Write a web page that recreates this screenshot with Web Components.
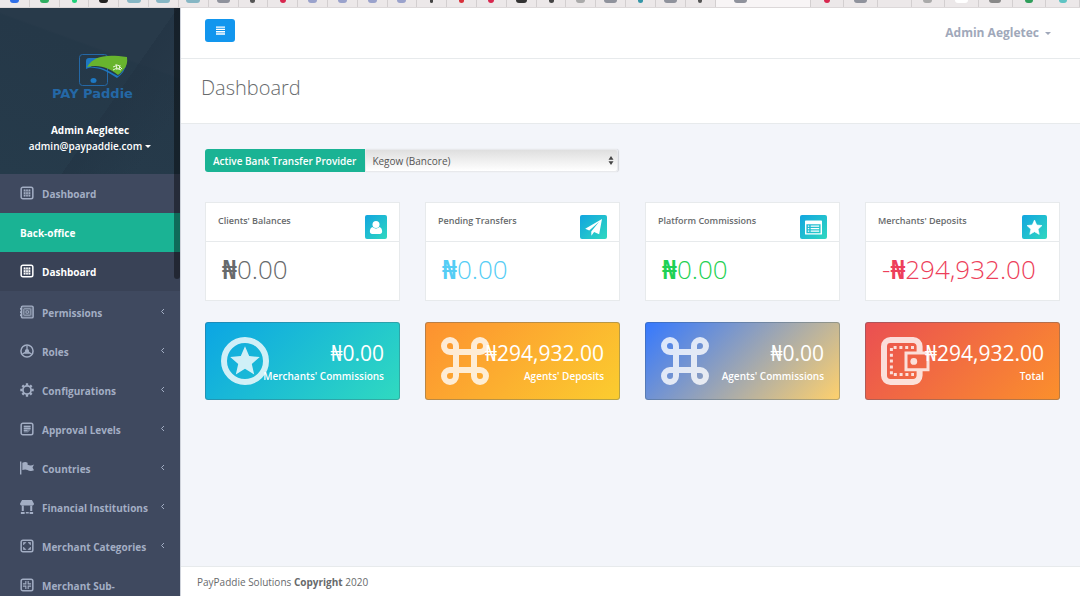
<!DOCTYPE html>
<html lang="en">
<head>
<meta charset="utf-8">
<meta name="viewport" content="width=device-width, initial-scale=1">
<title>PayPaddie - Dashboard</title>
<style>
  html, body { margin: 0; height: 100%; }
  body { font-family: "Open Sans", "Noto Sans", sans-serif; font-size: 10px; line-height: 16px; color: #676a6c; background: #f3f5fa; overflow: hidden; }
</style>
</head>
<body>
<pay-app></pay-app>
<script>
const define = (name, html, setup) => {
  const template = document.createElement('template');
  template.innerHTML = html;
  customElements.define(name, class extends HTMLElement {
    constructor() {
      super();
      this.attachShadow({ mode: 'open' }).append(template.content.cloneNode(true));
    }
    connectedCallback() { if (setup) setup(this, this.shadowRoot); }
  });
};

const STAR = 'M12 1.5l3.1 7 7.4.8-5.5 5 1.6 7.4L12 17.900l-6.600 3.800 1.600-7.400-5.500-5 7.400-.8z';
const frame = '<rect x="2" y="2" width="20" height="20" rx="3" fill="none" stroke="currentColor" stroke-width="2.600"/>';
const ICONS = {
  grid: frame + '<path d="M6 6h12v12H6z" fill="currentColor" opacity=".35"/><path d="M6.500 6h2.600v2.800H6.500zm4.200 0h2.600v2.800h-2.600zm4.200 0h2.600v2.800h-2.600zM6.500 10.500h2.600v3H6.500zm4.200 0h2.600v3h-2.600zm4.200 0h2.600v3h-2.600zM6.500 15.200h2.600V18H6.500zm4.200 0h2.600V18h-2.600zm4.200 0h2.600V18h-2.600z" fill="currentColor"/>',
  safe: '<rect x="2.500" y="2" width="20" height="20" rx="2" fill="currentColor" opacity=".3"/><rect x="2.500" y="2" width="20" height="20" rx="2" fill="none" stroke="currentColor" stroke-width="2.400"/><rect x="6.500" y="6.500" width="12" height="11" rx="1" fill="none" stroke="currentColor" stroke-width="1.500"/><circle cx="12.500" cy="12" r="2.500" fill="none" stroke="currentColor" stroke-width="1.500"/><path d="M0 5h3v3H0zM0 10.500h3v3H0zM0 16h3v3H0z" fill="currentColor"/>',
  wheel: '<circle cx="12" cy="12" r="10.400" fill="none" stroke="currentColor" stroke-width="2.600"/><path d="M12 3v7M12 12l-7.500 5M12 12l7.500 5M7 15.500h10" stroke="currentColor" stroke-width="2.200"/><circle cx="12" cy="12" r="3.600" fill="currentColor"/>',
  gear: '<circle cx="12" cy="12" r="7" fill="none" stroke="currentColor" stroke-width="3"/><path d="M12 .500v4M12 19.500v4M.500 12h4M19.500 12h4M4 4l3 3M17 17l3 3M4 20l3-3M17 7l3-3" stroke="currentColor" stroke-width="4"/>',
  note: frame + '<path d="M6.500 6.500h11.500v7l-4.500 4.500h-7z" fill="currentColor" opacity=".55"/><path d="M6.500 7.500H18M6.500 11H18M6.500 14.500h6" stroke="currentColor" stroke-width="1.800"/>',
  flag: '<path d="M0 1h2.400v22H0zM4 3c4-2 6-2 9 0v3.500c4 1.500 7 1.500 11-.5l-2.500 5L24 16c-5 2.500-8 1-11-.5-3-1.500-5-1.500-9 0z" fill="currentColor"/>',
  shop: '<path d="M3.500 0h17L24 6.500c0 2-1.500 3-3 3H3c-1.500 0-3-1-3-3zM3 10h3.500v9H3zM17.500 10H21v9h-3.500zM1.500 20.500H8V24H1.500zM10 20.500h5V23h-5zM16.500 20.500h6V24h-6z" fill="currentColor"/>',
  expand: frame + '<path d="M6 10V6h4zM14 6h4v4zM18 14v4h-4zM10 18H6v-4z" fill="currentColor" stroke="currentColor" stroke-width="1.200"/>',
  shrink: frame + '<path d="M10 5v5H5M14 5v5h5M10 19v-5H5M14 19v-5h5" fill="none" stroke="currentColor" stroke-width="1.900"/>',
  bars: '<path d="M0 1h24v3.600H0zM0 7.200h24v3.600H0zM0 13.400h24V17H0zM0 19.600h24v3.600H0z" fill="currentColor"/>',
  user: '<circle cx="12" cy="6.800" r="6" fill="currentColor"/><path d="M6 11c-3.500 1-4.500 4.500-4.500 8 0 2.500 1.500 4 4 4h13c2.500 0 4-1.500 4-4 0-3.500-1-7-4.500-8-3.500 3.400-8.500 3.400-12 0z" fill="currentColor"/>',
  plane: '<path d="M24 0l-4 21.500-7.200-3L9 23.500 8.800 17.500 20 4 6 16.200.3 13.800z" fill="currentColor"/>',
  list: '<path d="M1 2h22a1 1 0 0 1 1 1v18a1 1 0 0 1-1 1H1a1 1 0 0 1-1-1V3a1 1 0 0 1 1-1zm1 5.500v12.700h20V7.500z" fill="currentColor" fill-rule="evenodd"/><path d="M4 10h2M8 10h12M4 13.500h2M8 13.500h12M4 17h2M8 17h12" stroke="currentColor" stroke-width="1.800"/>',
  star: '<path d="' + STAR + '" fill="currentColor" stroke="currentColor" stroke-linejoin="round"/>',
  medal: '<circle cx="12" cy="12" r="10.500" fill="none" stroke="currentColor" stroke-width="3"/><path d="M12 4.600l2.100 4.900 5.300.5-4 3.500 1.200 5.200-4.600-2.800-4.600 2.800 1.200-5.200-4-3.500 5.300-.5z" fill="currentColor"/>',
  command: '<path d="M7.500 7.500h9v9h-9zM7.500 7.500H4.500a3 3 0 1 1 3-3zM16.500 7.500h3a3 3 0 1 0-3-3zM7.500 16.500H4.500a3 3 0 1 0 3 3zM16.500 16.500h3a3 3 0 1 1-3 3z" fill="none" stroke="currentColor" stroke-width="3"/>',
  wallet: '<path d="M19.300 7.500V4.700a3.200 3.200 0 0 0-3.200-3.200H4.700a3.200 3.200 0 0 0-3.200 3.200v14.600a3.200 3.200 0 0 0 3.200 3.200h11.400a3.200 3.200 0 0 0 3.200-3.200v-2.800" fill="none" stroke="currentColor" stroke-width="3"/><path d="M16.500 5.200H5.200v13.600h11.300" fill="none" stroke="currentColor" stroke-width="1.500" stroke-dasharray="1.500 1.400"/><path d="M12.500 8h11v8.400h-11z" fill="none" stroke="currentColor" stroke-width="1.500"/><circle cx="16.400" cy="12.200" r="1.700" fill="currentColor"/>'
};

define('pay-icon', `
  <style>:host { display: block; flex: none; width: 14px; height: 14px; } svg { display: block; width: 100%; height: 100%; overflow: visible; }</style>
  <svg viewBox="0 0 24 24" aria-hidden="true"></svg>`,
  (el, root) => { root.querySelector('svg').innerHTML = ICONS[el.getAttribute('name')]; });

define('tab-strip', `
  <style>
    :host { display: flex; height: 7px; overflow: hidden; background: #ece8e9; border-bottom: 1px solid #dcd8d9; }
    i { flex: 30 1 0; min-width: 0; box-sizing: border-box; border-right: 1px solid #d3cfd0; display: flex; justify-content: center; }
    i.wide { flex-grow: 34; } i.active { flex-grow: 98; background: #f8f5f6; justify-content: flex-start; }
    i.active b { margin-left: 18px; }
    b { width: var(--w, 9px); height: 3px; background: var(--c, #8f929c); border-radius: 0 0 4px 4px; }
  </style>`,
  (el, root) => {
    const marks = ['#2f6fe8', '#2fae62', '#1fd07a:5', '#222', '#86b6c4:14', '#86b6c4:14', '#86b6c4:14', '#8f929c:13', '#555:5', '#d8274f:6', '#9aa2cc', '#9aa2cc', '#9aa2cc', '#9aa2cc', '#444:3', '#d8303a:5', '#d8274f:6', '#333:11', '#444:5', '#aaa:9', '#8f929c:13', '#3596a8:5', '#8f929c:13', '#555:4', '#8f929c:13', '#d8274f:6', '#8f929c:13', '#ece8e9', '#aaa:9', '#fff:13', '#888:12', '#2f9e5b:8', '#5fc4c4:8'];
    marks.forEach((mark, n) => {
      const [color, width] = mark.split(':');
      const tab = document.createElement('i');
      if (n === 24) tab.className = 'active'; else if (n > 24) tab.className = 'wide';
      const dot = document.createElement('b');
      dot.style.setProperty('--c', color);
      dot.style.setProperty('--w', (width || 9) + 'px');
      tab.append(dot);
      root.append(tab);
    });
  });

define('profile-panel', `
  <style>
    :host { display: flex; flex-direction: column; align-items: center; box-sizing: border-box; height: 166px; padding-top: 44px; color: #fff; font-weight: 600;
      background: linear-gradient(125deg, transparent 60%, #22334399 60%, transparent 85%), linear-gradient(200deg, #283a4a 30%, #253848 31%, #263b4b); }
    svg { display: block; width: 92px; height: 48px; overflow: visible; }
    strong { margin-top: 22px; font-weight: 700; }
    button { display: flex; align-items: center; gap: 3px; border: 0; padding: 0; background: none; color: inherit; font: inherit; }
    button::after { content: ""; border: 3px solid transparent; border-top-color: currentColor; border-bottom: 0; }
  </style>
  <svg viewBox="-8 0 92 48" role="img" aria-label="PAY Paddie">
    <rect x="27.500" y="2.500" width="28" height="31" rx="3" fill="none" stroke="#2468a6"/>
    <path d="M34 17V9q0-3 3-3h14q-9 3-12 9z" fill="#1e78c2"/>
    <ellipse cx="41.500" cy="28.500" rx="3" ry="2.500" fill="#1e78c2"/>
    <path d="M35 16c13-3 19 2 31 8q3-2 6-7l2-4q-1 7-9 13C54 19 48 15 35 16z" fill="#1e78c2"/>
    <path d="M35 15C42 4 53 2 75 5q1 8-3 12-3 4-6 6C57 16 48 12 35 15z" fill="#68b42e"/>
    <path d="M61 15l5-2 4 4M61 18l4-2 4 2M64 12l1 6M68 13l-1 5" stroke="#e5f3d9" stroke-width="1" fill="none"/>
    <text x="0" y="46" font-family="DejaVu Sans, sans-serif" font-weight="700" font-size="13" fill="#2468a6">PAY Paddie</text>
  </svg>
  <strong>Admin Aegletec</strong>
  <button type="button">admin@paypaddie.com</button>`);

define('nav-link', `
  <style>
    :host { display: block; color: #a3aec4; font-weight: 700; }
    :host([section]) { background: #1ab394; color: #fff; }
    :host([active]) { background: #394256; color: #fff; }
    a { display: flex; align-items: center; gap: 8px; height: 39px; box-sizing: border-box; padding: 0 15px 0 20px; color: inherit; text-decoration: none; white-space: nowrap; }
    span { flex: 1; padding-top: 1px; }
    svg { width: 5px; height: 7px; margin-bottom: 3px; display: none; }
    pay-icon { margin-bottom: 2px; }
    :host([more]) svg { display: block; }
  </style>
  <a href="#"><pay-icon></pay-icon><span><slot></slot></span><svg viewBox="0 0 5 7" aria-hidden="true"><path d="M4 1L1.500 3.500 4 6" fill="none" stroke="currentColor"/></svg></a>`,
  (el, root) => {
    const icon = root.querySelector('pay-icon');
    if (el.hasAttribute('icon')) icon.replaceWith(Object.assign(document.createElement('template'), { innerHTML: `<pay-icon name="${el.getAttribute('icon')}"></pay-icon>` }).content);
    else icon.remove();
  });

define('side-nav', `
  <style>
    :host { display: block; position: relative; width: 180px; flex: none; overflow: hidden; background: #3f495f; border-right: 1px solid #cfd3db; }
    .more { padding-top: 2px; }
    .thumb { position: absolute; top: 0; right: 0; width: 6px; height: 271px; background: #000; opacity: .4; border-radius: 0 0 4px 4px; }
  </style>
  <profile-panel></profile-panel>
  <nav>
    <nav-link icon="grid">Dashboard</nav-link>
    <nav-link section>Back-office</nav-link>
    <nav-link icon="grid" active>Dashboard</nav-link>
    <div class="more">
      <nav-link icon="safe" more>Permissions</nav-link>
      <nav-link icon="wheel" more>Roles</nav-link>
      <nav-link icon="gear" more>Configurations</nav-link>
      <nav-link icon="note" more>Approval Levels</nav-link>
      <nav-link icon="flag" more>Countries</nav-link>
      <nav-link icon="shop" more>Financial Institutions</nav-link>
      <nav-link icon="expand" more>Merchant Categories</nav-link>
      <nav-link icon="shrink">Merchant Sub-</nav-link>
    </div>
  </nav>
  <div class="thumb"></div>`);

define('top-bar', `
  <style>
    :host { display: flex; align-items: center; justify-content: space-between; height: 51px; box-sizing: border-box; padding: 0 29px 0 24px; background: #fff; border-bottom: 1px solid #e7eaec; }
    button { border: 0; padding: 0; font: inherit; }
    .menu { display: grid; place-items: center; width: 30px; height: 23px; margin-bottom: 5px; border-radius: 3px; background: #1296ee; color: #fff; }
    .menu pay-icon { width: 9px; height: 9px; }
    .account { display: flex; align-items: center; gap: 6px; background: none; color: #a0a8ba; font-size: 12px; font-weight: 700; }
    .account::after { content: ""; border: 3px solid transparent; border-top-color: currentColor; border-bottom: 0; }
  </style>
  <button class="menu" type="button" aria-label="Toggle menu"><pay-icon name="bars"></pay-icon></button>
  <button class="account" type="button">Admin Aegletec</button>`);

define('page-heading', `
  <style>
    :host { display: flex; align-items: center; height: 65px; box-sizing: border-box; padding: 0 20px 7px; background: #fff; border-bottom: 1px solid #e7eaec; }
    h1 { margin: 0; font-size: 20px; line-height: 26px; font-weight: 300; }
  </style>
  <h1><slot></slot></h1>`);

define('provider-picker', `
  <style>
    :host { display: flex; height: 23px; width: 413px; max-width: 100%; }
    label { display: flex; align-items: center; padding: 0 9px 0 8px; background: #1ab394; color: #fff; font-weight: 600; border-radius: 3px 0 0 3px; white-space: nowrap; }
    div { position: relative; flex: 1; }
    select { appearance: none; width: 100%; height: 23px; border: 1px solid #e8e9ec; border-radius: 0 3px 3px 0; padding: 0 20px 0 6px; font: inherit; color: #555; background: linear-gradient(#dfdfdf, #fff); box-shadow: 1px 0 1px #d0d2d6; }
    svg { position: absolute; right: 4px; top: 7px; width: 6px; height: 9px; pointer-events: none; }
  </style>
  <label for="provider">Active Bank Transfer Provider</label>
  <div><select id="provider"><option>Kegow (Bancore)</option></select>
  <svg viewBox="0 0 6 9" aria-hidden="true"><path d="M3 0l2.500 3.700h-5zM3 9l2.500-3.700h-5z" fill="#444"/></svg></div>`);

define('stat-card', `
  <style>
    :host { display: block; background: #fff; border: 1px solid #e7eaec; min-width: 0; }
    header { display: flex; justify-content: space-between; align-items: flex-start; height: 39px; box-sizing: border-box; padding: 12px 12px 0; border-bottom: 1px solid #e7eaec; }
    h2 { margin: 0; font-size: 9px; line-height: 12px; font-weight: 600; white-space: nowrap; }
    .badge { display: grid; place-items: center; height: 24px; padding: 0 4px; border-radius: 2px; color: #fff; background: linear-gradient(135deg, #12a5e0, #2fd8c0); }
    .badge pay-icon { width: var(--icon, 19px); height: 17px; }
    p { margin: 0; padding: 10px 16px 14px; font-size: 26px; line-height: 34px; font-weight: 300; color: var(--value, #676a6c); white-space: nowrap; }
  </style>
  <header><h2></h2><span class="badge"></span></header>
  <p><slot></slot></p>`,
  (el, root) => {
    root.querySelector('h2').textContent = el.getAttribute('heading');
    root.querySelector('.badge').innerHTML = `<pay-icon name="${el.getAttribute('icon')}"></pay-icon>`;
  });

define('total-card', `
  <style>
    :host { display: block; position: relative; box-sizing: border-box; height: 78px; padding: 17px 15px 0; border: 1px solid rgba(60, 90, 110, .35); border-radius: 3px; color: #fff; text-align: right; min-width: 0; white-space: nowrap; background: linear-gradient(135deg, var(--from), var(--to)) border-box; }
    pay-icon { position: absolute; left: 15px; top: 14px; width: 48px; height: 48px; opacity: .8; }
    p, h2 { position: relative; margin: 0; }
    p { font-size: 21px; line-height: 26px; }
    h2 { font-size: 10px; line-height: 20px; font-weight: 600; }
  </style>
  <div></div>
  <p><slot></slot></p>
  <h2></h2>`,
  (el, root) => {
    root.querySelector('div').innerHTML = `<pay-icon name="${el.getAttribute('icon')}"></pay-icon>`;
    root.querySelector('h2').textContent = el.getAttribute('heading');
  });

define('page-footer', `
  <style>
    :host { display: block; box-sizing: border-box; padding: 7px 16px 6px; background: #fff; border-top: 1px solid #e7eaec; }
    strong { font-weight: 700; }
  </style>
  PayPaddie Solutions <strong>Copyright</strong> 2020`);

define('pay-app', `
  <style>
    :host { display: flex; flex-direction: column; height: 100vh; }
    .shell { flex: 1; min-height: 0; display: flex; }
    .page { flex: 1; min-width: 0; display: flex; flex-direction: column; background: #fff; }
    main { flex: 1; min-height: 0; padding: 25px 20px 20px 24px; background: #f3f5fa; }
    .grid { display: grid; grid-template-columns: repeat(4, minmax(0, 1fr)); gap: 21px 25px; margin-top: 30px; }
    b { font-weight: 700; }
  </style>
  <tab-strip></tab-strip>
  <div class="shell">
    <side-nav></side-nav>
    <div class="page">
      <top-bar></top-bar>
      <page-heading>Dashboard</page-heading>
      <main>
        <provider-picker></provider-picker>
        <div class="grid">
          <stat-card heading="Clients' Balances" icon="user" style="--icon: 14px"><b>₦</b>0.00</stat-card>
          <stat-card heading="Pending Transfers" icon="plane" style="--value: #55cdf5"><b>₦</b>0.00</stat-card>
          <stat-card heading="Platform Commissions" icon="list" style="--value: #1fd155"><b>₦</b>0.00</stat-card>
          <stat-card heading="Merchants' Deposits" icon="star" style="--value: #ed3f5b; --icon: 17px">-<b>₦</b>294,932.00</stat-card>
          <total-card heading="Merchants' Commissions" icon="medal" style="--from: #0ba5e4; --to: #30dac0">₦0.00</total-card>
          <total-card heading="Agents' Deposits" icon="command" style="--from: #fd9130; --to: #fbcd2f">₦294,932.00</total-card>
          <total-card heading="Agents' Commissions" icon="command" style="--from: #3478ff; --to: #ffd16c">₦0.00</total-card>
          <total-card heading="Total" icon="wallet" style="--from: #ea4f52; --to: #fb902c">₦294,932.00</total-card>
        </div>
      </main>
      <page-footer></page-footer>
    </div>
  </div>`);
</script>
</body>
</html>
